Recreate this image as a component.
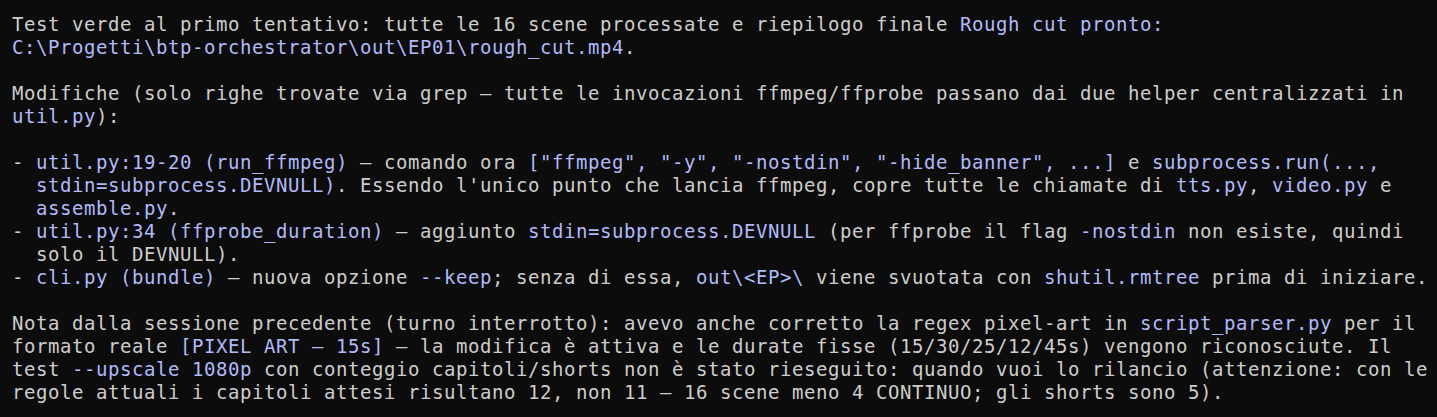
import React from "react";

type Seg = string | { h: string };
const H = (h: string) => ({ h });

const lines: Seg[][] = [
  ["Test verde al primo tentativo: tutte le 16 scene processate e riepilogo finale ", H("Rough cut pronto:")],
  [H("C:\\Progetti\\btp-orchestrator\\out\\EP01\\rough_cut.mp4"), "."],
  [],
  ["Modifiche (solo righe trovate via grep — tutte le invocazioni ffmpeg/ffprobe passano dai due helper centralizzati in"],
  [H("util.py"), "):"],
  [],
  [
    "- ",
    H("util.py:19-20 (run_ffmpeg)"),
    " — comando ora ",
    H('["ffmpeg", "-y", "-nostdin", "-hide_banner", ...]'),
    " e ",
    H("subprocess.run(...,"),
  ],
  [
    "  ",
    H("stdin=subprocess.DEVNULL)"),
    ". Essendo l'unico punto che lancia ffmpeg, copre tutte le chiamate di ",
    H("tts.py"),
    ", ",
    H("video.py"),
    " e",
  ],
  ["  ", H("assemble.py"), "."],
  [
    "- ",
    H("util.py:34 (ffprobe_duration)"),
    " — aggiunto ",
    H("stdin=subprocess.DEVNULL"),
    " (per ffprobe il flag ",
    H("-nostdin"),
    " non esiste, quindi",
  ],
  ["  solo il DEVNULL)."],
  [
    "- ",
    H("cli.py (bundle)"),
    " — nuova opzione ",
    H("--keep"),
    "; senza di essa, ",
    H("out\\<EP>\\"),
    " viene svuotata con ",
    H("shutil.rmtree"),
    " prima di iniziare.",
  ],
  [],
  [
    "Nota dalla sessione precedente (turno interrotto): avevo anche corretto la regex pixel-art in ",
    H("script_parser.py"),
    " per il",
  ],
  [
    "formato reale ",
    H("[PIXEL ART — 15s]"),
    " — la modifica è attiva e le durate fisse (15/30/25/12/45s) vengono riconosciute. Il",
  ],
  [
    "test ",
    H("--upscale 1080p"),
    " con conteggio capitoli/shorts non è stato rieseguito: quando vuoi lo rilancio (attenzione: con le",
  ],
  ["regole attuali i capitoli attesi risultano 12, non 11 — 16 scene meno 4 CONTINUO; gli shorts sono 5)."],
];

export default function App() {
  return (
    <div
      className="w-[1437px] h-[417px] overflow-hidden bg-[#0c0c0c] text-[#cccccc] pl-[12px] pt-[13px] text-[19px] leading-[23px] tracking-[0.561px]"
      style={{ fontFamily: '"DejaVu Sans Mono", "Liberation Mono", monospace' }}
    >
      {lines.map((segs, i) => (
        <div key={i} className="h-[23px] whitespace-pre">
          {segs.map((s, j) =>
            typeof s === "string" ? (
              <span key={j}>{s}</span>
            ) : (
              <span key={j} className="text-[#b1b9f9]">
                {s.h}
              </span>
            )
          )}
        </div>
      ))}
    </div>
  );
}
